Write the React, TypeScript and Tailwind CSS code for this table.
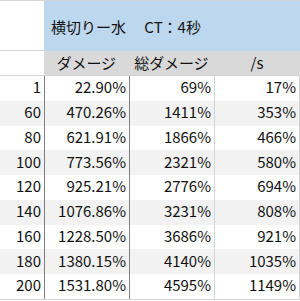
import * as React from "react";

const rows = [
  ["1", "22.90%", "69%", "17%"],
  ["60", "470.26%", "1411%", "353%"],
  ["80", "621.91%", "1866%", "466%"],
  ["100", "773.56%", "2321%", "580%"],
  ["120", "925.21%", "2776%", "694%"],
  ["140", "1076.86%", "3231%", "808%"],
  ["160", "1228.50%", "3686%", "921%"],
  ["180", "1380.15%", "4140%", "1035%"],
  ["200", "1531.80%", "4595%", "1149%"],
];

const font = { fontFamily: '"Noto Sans CJK JP", "Noto Sans", sans-serif' };

export default function App() {
  return (
    <div
      className="w-[300px] h-[301px] bg-white text-[#111] text-[15px] leading-none overflow-hidden"
      style={font}
    >
      {/* title row */}
      <div className="flex h-[51px] border-t border-[#d4d4d4]">
        <div className="w-[44px] border-b border-[#d4d4d4]" />
        <div className="flex-1 bg-[#bdd7ee] flex items-center pl-[7px] whitespace-pre">
          横切りー水　 CT：4秒
        </div>
      </div>

      {/* column headers */}
      <div className="flex h-[25px] border-b border-[#d4d4d4]">
        <div className="w-[44px]" />
        <div className="flex-1 bg-[#d9d9d9] flex pb-[2px]">
          <div className="w-[85px] flex items-center justify-center">ダメージ</div>
          <div className="w-[85px] flex items-center justify-center">総ダメージ</div>
          <div className="w-[86px] flex items-center justify-center">/s</div>
        </div>
      </div>

      {/* data */}
      <div className="flex flex-col border-b border-[#d4d4d4] w-[300px]">
        {rows.map((r, i) => (
          <div
            key={r[0]}
            className={
              "flex h-[24.75px] " + (i % 2 === 1 ? "bg-[#f2f2f2]" : "bg-white")
            }
          >
            <div className="w-[45px] border-r border-[#808080] flex items-center justify-end pr-[3px] pb-[3px]">
              {r[0]}
            </div>
            <div className="w-[85px] border-r border-[#808080] flex items-center justify-end pr-[3px] pb-[3px]">
              {r[1]}
            </div>
            <div className="w-[85px] border-r border-[#d4d4d4] flex items-center justify-end pr-[3px] pb-[3px]">
              {r[2]}
            </div>
            <div className="w-[85px] border-r border-[#d4d4d4] flex items-center justify-end pr-[3px] pb-[3px]">
              {r[3]}
            </div>
          </div>
        ))}
      </div>
    </div>
  );
}
